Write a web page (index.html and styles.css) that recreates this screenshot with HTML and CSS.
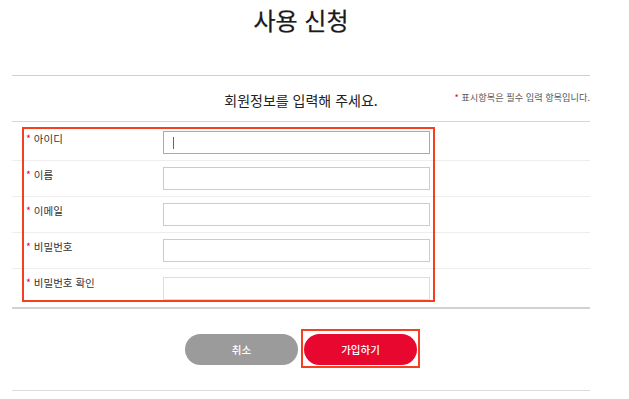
FILE: index.html
```html
<!DOCTYPE html>
<html lang="ko">
<head>
    <meta charset="UTF-8">
    <meta name="viewport" content="width=device-width, initial-scale=1.0">
    <title>사용 신청</title>
    <link rel="stylesheet" href="styles.css">
</head>
<body>
    <div class="page">
        <h1 class="title">사용 신청</h1>

        <div class="form-head">
            <h2 class="form-head__text">회원정보를 입력해 주세요.</h2>
            <p class="form-head__note"><span class="req">*</span> 표시항목은 필수 입력 항목입니다.</p>
        </div>

        <form class="join-form" id="joinForm">
            <div class="rows">
                <div class="row">
                    <label class="row__label" for="userId"><span class="req">*</span> 아이디</label>
                    <input class="row__input row__input--focus" type="text" id="userId" name="userId">
                </div>
                <div class="row">
                    <label class="row__label" for="userName"><span class="req">*</span> 이름</label>
                    <input class="row__input" type="text" id="userName" name="userName">
                </div>
                <div class="row">
                    <label class="row__label" for="userEmail"><span class="req">*</span> 이메일</label>
                    <input class="row__input" type="text" id="userEmail" name="userEmail">
                </div>
                <div class="row">
                    <label class="row__label" for="userPw"><span class="req">*</span> 비밀번호</label>
                    <input class="row__input" type="password" id="userPw" name="userPw">
                </div>
                <div class="row row--last">
                    <label class="row__label" for="userPw2"><span class="req">*</span> 비밀번호 확인</label>
                    <input class="row__input row__input--light" type="password" id="userPw2" name="userPw2">
                </div>
                <div class="mark mark--rows"></div>
            </div>

            <div class="buttons">
                <button type="button" class="btn btn--cancel">취소</button>
                <span class="btn-wrap">
                    <button type="button" class="btn btn--submit">가입하기</button>
                    <span class="mark mark--btn"></span>
                </span>
            </div>
        </form>
    </div>
</body>
</html>
```

FILE: styles.css
```css
body {
    margin: 0;
    background: #fff;
    font-family: "Noto Sans CJK KR", "Noto Sans", sans-serif;
    color: #222;
}

.page {
    width: 578px;
    margin-left: 12px;
}

.title {
    margin: 0;
    height: 75px;
    padding-top: 3px;
    box-sizing: border-box;
    font-size: 24px;
    font-weight: 400;
    line-height: 34px;
    text-align: center;
    color: #1a1a1a;
    -webkit-text-stroke: 0.25px #1a1a1a;
}

/* 안내 영역 */
.form-head {
    position: relative;
    height: 47px;
    border-top: 1px solid #cfcfcf;
    border-bottom: 1px solid #d6d6d6;
    box-sizing: border-box;
    display: flex;
    align-items: center;
    justify-content: center;
}

.form-head__text {
    margin: 0;
    font-size: 14px;
    font-weight: 400;
    color: #222;
    padding-top: 2px;
}

.form-head__note {
    position: absolute;
    right: 0;
    top: 14px;
    margin: 0;
    font-size: 9.2px;
    color: #555;
}

.req {
    color: #e8072f;
}

/* 입력 행 */
.rows {
    position: relative;
    padding-top: 3px;
    border-bottom: 2px solid #d2d2d2;
}

.row {
    display: flex;
    align-items: center;
    height: 36px;
    box-sizing: border-box;
    border-bottom: 1px solid #eee;
}

.row--last {
    border-bottom: none;
    height: 38px;
}

.row__label {
    align-self: flex-start;
    width: 151px;
    padding: 7px 0 0 14px;
    box-sizing: border-box;
    font-size: 10.5px;
    line-height: 14px;
    color: #333;
}

.row__input {
    width: 267px;
    height: 23px;
    box-sizing: border-box;
    border: 1px solid #ccc;
    padding: 0 8px;
    font-size: 12px;
    outline: none;
}

/* 포커스된 첫 칸: 커서 표시 */
.row__input--focus {
    border-color: #aaa;
    background: linear-gradient(#666, #666) no-repeat 9px 5px / 1px 12px;
}

.row__input--light {
    border-color: #ddd;
}

/* 버튼 */
.buttons {
    display: flex;
    justify-content: center;
    gap: 6px;
    padding: 25px 0;
    border-bottom: 1px solid #ddd;
}

.btn {
    width: 113px;
    height: 31px;
    border: none;
    border-radius: 16px;
    font-family: inherit;
    font-size: 10.5px;
    font-weight: 500;
    color: #fff;
    cursor: pointer;
}

.btn--cancel {
    background: #9b9b9b;
}

.btn--submit {
    background: #e8072f;
}

.btn-wrap {
    position: relative;
    display: block;
}

/* 빨간 표시 박스 */
.mark {
    position: absolute;
    border: 2px solid #f4401e;
    pointer-events: none;
}

.mark--rows {
    left: 10px;
    top: 5px;
    width: 409px;
    height: 171px;
}

.mark--btn {
    left: -3px;
    top: -5px;
    width: 115px;
    height: 35px;
}
```
